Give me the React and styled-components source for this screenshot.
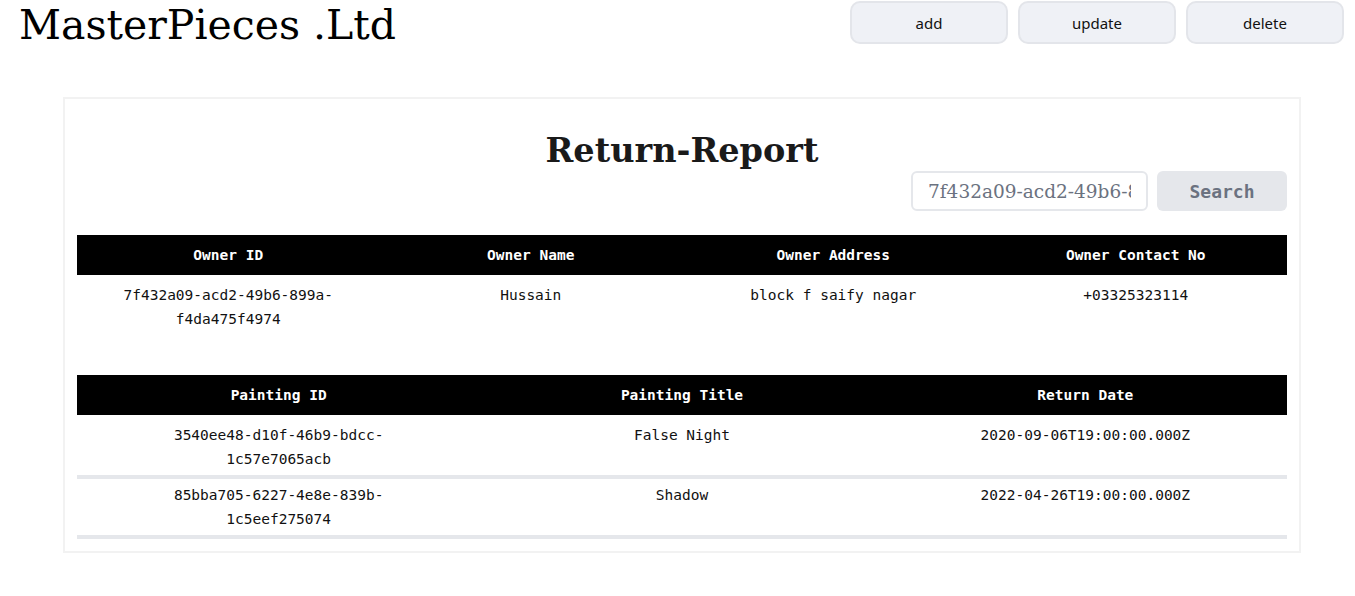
import React from "react";
import styled, { createGlobalStyle } from "styled-components";

const GlobalStyle = createGlobalStyle`
  body {
    margin: 0;
    background: #ffffff;
    font-family: "DejaVu Serif", Georgia, serif;
  }
`;

const Page = styled.div`
  width: 1355px;
  min-height: 596px;
`;

const TopBar = styled.header`
  display: flex;
  justify-content: space-between;
  align-items: flex-start;
  padding: 1px 11px 0 19px;
  height: 50px;
`;

const Brand = styled.h1`
  margin: 0;
  font-family: "DejaVu Serif", Georgia, serif;
  font-weight: 400;
  font-size: 41px;
  line-height: 48px;
  color: #000;
`;

const Actions = styled.div`
  display: flex;
  gap: 10px;
`;

const ActionButton = styled.button`
  width: 158px;
  height: 43px;
  background: #eff1f6;
  border: 2px solid #e3e5ea;
  border-radius: 10px;
  font-family: "Noto Sans", "Open Sans", sans-serif;
  font-size: 15px;
  color: #111;
  cursor: pointer;
`;

const Card = styled.section`
  width: 1238px;
  box-sizing: border-box;
  margin: 46px 0 0 63px;
  border: 2px solid #f2f2f2;
  padding: 12px;
`;

const Title = styled.h2`
  margin: 20px 0 0;
  text-align: center;
  font-family: "DejaVu Serif", Georgia, serif;
  font-weight: 700;
  font-size: 33.5px;
  line-height: 40px;
  color: #1a1a1a;
`;

const SearchRow = styled.div`
  display: flex;
  justify-content: flex-end;
  gap: 9px;
`;

const SearchInput = styled.input`
  width: 237px;
  height: 40px;
  box-sizing: border-box;
  border: 2px solid #e5e7eb;
  border-radius: 6px;
  padding: 0 15px;
  font-family: "DejaVu Serif", Georgia, serif;
  font-size: 18.5px;
  color: #6b7280;
  outline: none;
  &::placeholder {
    color: #6b7280;
  }
`;

const SearchButton = styled.button`
  width: 130px;
  height: 40px;
  border: none;
  border-radius: 6px;
  background: #e5e7eb;
  color: #6b7280;
  font-family: "DejaVu Sans Mono", monospace;
  font-weight: 700;
  font-size: 18px;
  cursor: pointer;
`;

const Table = styled.table`
  width: 100%;
  table-layout: fixed;
  border-collapse: collapse;
  margin-top: ${({ $top }) => $top}px;
  font-family: "DejaVu Sans Mono", "Liberation Mono", monospace;
  font-size: 14.5px;
`;

const HeadCell = styled.th`
  background: #000;
  color: #fff;
  height: 40px;
  padding: 0;
  font-weight: 700;
  text-align: center;
`;

const Row = styled.tr`
  border-bottom: ${({ $lined }) => ($lined ? "4px solid #e5e7eb" : "none")};
`;

const Cell = styled.td`
  padding: 4px ${({ $pad }) => $pad}px 4px;
  line-height: 24px;
  text-align: center;
  vertical-align: top;
  color: #111;
  tr:first-child > & {
    padding-top: 8px;
  }
`;

const owner = {
  id: "7f432a09-acd2-49b6-899a-f4da475f4974",
  name: "Hussain",
  address: "block f saify nagar",
  contact: "+03325323114",
};

const paintings = [
  { id: "3540ee48-d10f-46b9-bdcc-1c57e7065acb", title: "False Night", date: "2020-09-06T19:00:00.000Z" },
  { id: "85bba705-6227-4e8e-839b-1c5eef275074", title: "Shadow", date: "2022-04-26T19:00:00.000Z" },
];

export default function App() {
  return (
    <Page>
      <GlobalStyle />
      <TopBar>
        <Brand>MasterPieces .Ltd</Brand>
        <Actions>
          <ActionButton>add</ActionButton>
          <ActionButton>update</ActionButton>
          <ActionButton>delete</ActionButton>
        </Actions>
      </TopBar>

      <Card>
        <Title>Return-Report</Title>
        <SearchRow>
          <SearchInput placeholder="7f432a09-acd2-49b6-899a-f4da475f4974" />
          <SearchButton>Search</SearchButton>
        </SearchRow>

        <Table $top={24}>
          <thead>
            <tr>
              <HeadCell>Owner ID</HeadCell>
              <HeadCell>Owner Name</HeadCell>
              <HeadCell>Owner Address</HeadCell>
              <HeadCell>Owner Contact No</HeadCell>
            </tr>
          </thead>
          <tbody>
            <Row>
              <Cell $pad={16}>{owner.id}</Cell>
              <Cell $pad={16}>{owner.name}</Cell>
              <Cell $pad={16}>{owner.address}</Cell>
              <Cell $pad={16}>{owner.contact}</Cell>
            </Row>
          </tbody>
        </Table>

        <Table $top={40}>
          <thead>
            <tr>
              <HeadCell>Painting ID</HeadCell>
              <HeadCell>Painting Title</HeadCell>
              <HeadCell>Return Date</HeadCell>
            </tr>
          </thead>
          <tbody>
            {paintings.map((p) => (
              <Row key={p.id} $lined>
                <Cell $pad={48}>{p.id}</Cell>
                <Cell $pad={48}>{p.title}</Cell>
                <Cell $pad={48}>{p.date}</Cell>
              </Row>
            ))}
          </tbody>
        </Table>
      </Card>
    </Page>
  );
}
